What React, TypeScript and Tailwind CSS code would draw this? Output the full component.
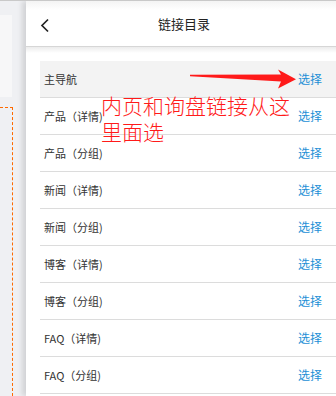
import React from "react";

const rows = [
  "主导航",
  "产品（详情)",
  "产品（分组)",
  "新闻（详情)",
  "新闻（分组)",
  "博客（详情)",
  "博客（分组)",
  "FAQ（详情)",
  "FAQ（分组)",
];

export default function App() {
  return (
    <div
      className="relative w-[336px] h-[396px] overflow-hidden bg-[#eff0f3] border-t border-[#c9c9c9] flex"
      style={{ fontFamily: '"Noto Sans CJK SC", "Noto Sans", sans-serif' }}
    >
      {/* left canvas edge */}
      <div className="w-[26px] shrink-0 flex flex-col pt-[14px]">
        <div className="w-[12px] h-[82px] bg-[#f7f7f8]" />
        <div className="mt-[10px] w-[13px] flex-1 border-t border-r border-dashed border-[#ff6a00]" />
      </div>

      {/* link panel */}
      <div className="flex-1 flex flex-col bg-white shadow-[-4px_0_5px_rgba(0,0,0,0.12)]">
        <div className="h-[46px] shrink-0 relative flex items-center justify-center border-b border-[#d6d6d6] bg-gradient-to-b from-[#f4f4f4] to-white to-[20%]">
          <svg
            className="absolute left-[14px] top-[17px]"
            width="10"
            height="15"
            viewBox="0 0 10 15"
          >
            <polyline
              points="8,1.5 2,7.5 8,13.5"
              fill="none"
              stroke="#222"
              strokeWidth="1.7"
            />
          </svg>
          <span className="text-[13px] text-[#222] ml-[6px]">链接目录</span>
        </div>
        <div className="flex-1 pl-[14px] pt-[14px] bg-gradient-to-b from-[#ececec] to-white to-[6px]">
          {rows.map((r, i) => (
            <div
              key={r}
              className={`h-[37px] flex items-center justify-between border-b border-[#dcdcdc] pl-[4px] pr-[14px] ${i === 0 ? "bg-[#f3f3f3]" : ""}`}
            >
              <span className="text-[11px] text-[#333]">{r}</span>
              <span className="text-[12px] text-[#1d8fd6]">选择</span>
            </div>
          ))}
        </div>
      </div>

      {/* red annotation over the screenshot */}
      <svg
        className="absolute left-0 top-0 pointer-events-none"
        width="336"
        height="396"
        viewBox="0 0 336 396"
      >
        <polygon
          points="190,73.8 281,73.6 278,68.5 296,78.3 278,87.5 281,80.5 190,75.2"
          fill="#ff1a1a"
        />
      </svg>
      <div className="absolute left-[101px] top-[91px] text-[21px] leading-[26px] font-light text-[#ff1a1a] w-[200px]">
        内页和询盘链接从这
        <br />
        里面选
      </div>
    </div>
  );
}
